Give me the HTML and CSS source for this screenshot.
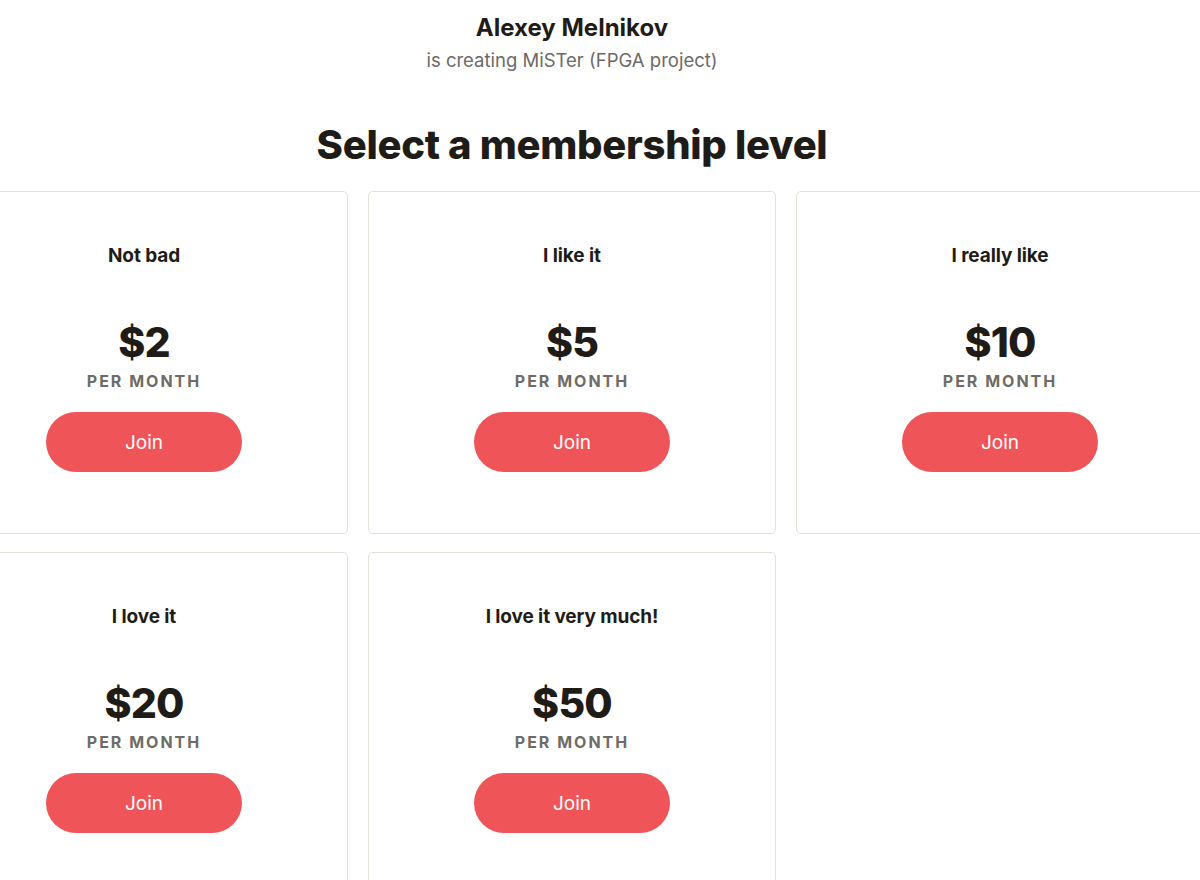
FILE: index.html
```html
<!DOCTYPE html>
<html lang="en">
<head>
<meta charset="utf-8">
<title>Select a membership level</title>
<link rel="stylesheet" href="styles.css">
</head>
<body>
<div class="page">
  <header class="creator">
    <h2 class="creator-name">Alexey Melnikov</h2>
    <p class="creator-desc">is creating MiSTer (FPGA project)</p>
  </header>
  <h1 class="heading">Select a membership level</h1>
  <div class="tiers">
    <div class="tier">
      <div class="tier-title">Not bad</div>
      <div class="tier-price">$2</div>
      <div class="tier-period">PER MONTH</div>
      <button class="join">Join</button>
    </div>
    <div class="tier">
      <div class="tier-title">I like it</div>
      <div class="tier-price">$5</div>
      <div class="tier-period">PER MONTH</div>
      <button class="join">Join</button>
    </div>
    <div class="tier">
      <div class="tier-title">I really like</div>
      <div class="tier-price">$10</div>
      <div class="tier-period">PER MONTH</div>
      <button class="join">Join</button>
    </div>
    <div class="tier">
      <div class="tier-title">I love it</div>
      <div class="tier-price">$20</div>
      <div class="tier-period">PER MONTH</div>
      <button class="join">Join</button>
    </div>
    <div class="tier">
      <div class="tier-title">I love it very much!</div>
      <div class="tier-price">$50</div>
      <div class="tier-period">PER MONTH</div>
      <button class="join">Join</button>
    </div>
  </div>
</div>
</body>
</html>
```
FILE: styles.css
```css
html, body {
  margin: 0;
  padding: 0;
  background: #ffffff;
  overflow: hidden;
}
body {
  font-family: Inter, "Noto Sans", "Liberation Sans", sans-serif;
  color: #1f1c17;
}
.page {
  width: 1264px;
  margin-left: -60px;
}
.creator {
  text-align: center;
  padding-top: 14px;
}
.creator-name {
  margin: 0;
  font-size: 24px;
  line-height: 28px;
  font-weight: 700;
  letter-spacing: 0;
}
.creator-desc {
  margin: 5px 0 0;
  font-size: 18.5px;
  line-height: 26px;
  color: #6b6a66;
}
.heading {
  margin: 48px 0 0;
  text-align: center;
  font-size: 40px;
  line-height: 48px;
  font-weight: 800;
  letter-spacing: -0.3px;
}
.tiers {
  margin-top: 22px;
  display: grid;
  grid-template-columns: repeat(3, 408px);
  column-gap: 20px;
  row-gap: 18px;
}
.tier {
  box-sizing: border-box;
  border: 1px solid #e3e0da;
  border-radius: 5px;
  padding: 52px 24px 61px;
  display: flex;
  flex-direction: column;
  align-items: center;
  text-align: center;
}
.tier-title {
  font-size: 19px;
  line-height: 24px;
  font-weight: 700;
  letter-spacing: -0.1px;
}
.tier-price {
  margin-top: 50px;
  font-size: 41px;
  line-height: 48px;
  font-weight: 800;
  letter-spacing: -0.8px;
}
.tier-period {
  margin-top: 5px;
  font-size: 16px;
  line-height: 20px;
  font-weight: 700;
  letter-spacing: 2px;
  color: #6f6c66;
}
.join {
  margin-top: 21px;
  width: 196px;
  height: 60px;
  border: none;
  border-radius: 30px;
  background: #ef5558;
  color: #ffffff;
  font-family: inherit;
  font-size: 19px;
  font-weight: 400;
  cursor: pointer;
}
```
